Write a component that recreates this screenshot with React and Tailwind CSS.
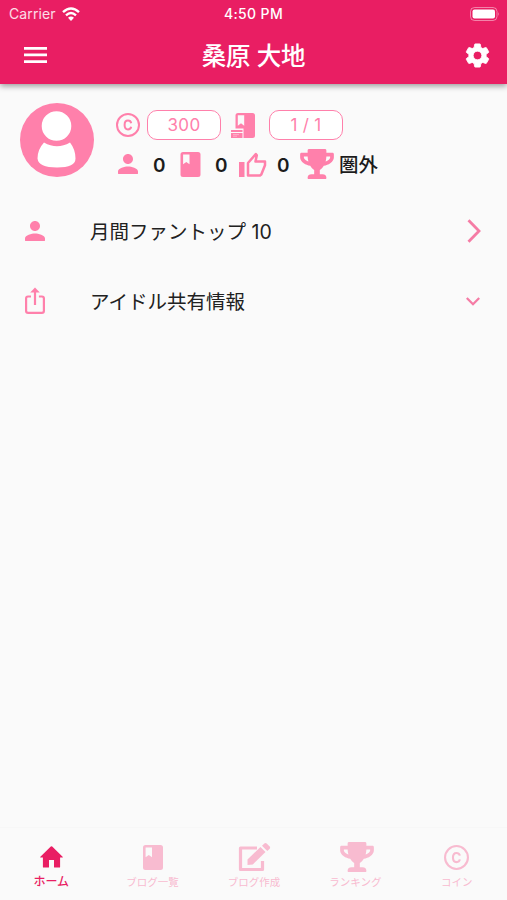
import React from "react";
import { FaTrophy } from "react-icons/fa";

const Person = ({ className }) => (
  <svg viewBox="4 4 16 16" className={className} fill="currentColor">
    <path d="M12 12c2.21 0 4-1.79 4-4s-1.79-4-4-4-4 1.79-4 4 1.79 4 4 4zm0 2c-2.67 0-8 1.34-8 4v1.300q0 .7.700.700h14.600q.7 0 .7-.7V18c0-2.66-5.33-4-8-4z" />
  </svg>
);

const Coin = ({ className }) => (
  <svg viewBox="0 0 24 24" className={className} fill="none" stroke="currentColor">
    <circle cx="12" cy="12" r="11" strokeWidth="2" />
    <path d="M15.2 10.2C14.9 8.6 13.7 7.6 12 7.6c-2.1 0-3.4 1.6-3.4 4.4s1.3 4.4 3.4 4.4c1.7 0 2.9-1 3.2-2.6" strokeWidth="2" />
  </svg>
);

const Book = ({ className }) => (
  <svg viewBox="0 0 20 25" className={className} fill="currentColor" fillRule="evenodd">
    <path d="M2.5 0h15A2.5 2.5 0 0 1 20 2.5v20a2.5 2.5 0 0 1-2.5 2.5h-15A2.5 2.5 0 0 1 0 22.500v-20A2.500 2.500 0 0 1 2.500 0zM2.600 2.400v9.800l3.200-2.200 3.200 2.200V2.400z" />
  </svg>
);

const BookCard = ({ className }) => (
  <svg viewBox="0 0 24 25" className={className} fill="currentColor" fillRule="evenodd">
    <path d="M7 0h14.500A2.500 2.500 0 0 1 24 2.500v20a2.500 2.500 0 0 1-2.500 2.500H12.500v-9.500H4.500v-13A2.500 2.500 0 0 1 7 0zM6.800 2.300v10.500l3.200-2.500 3.200 2.500V2.300z" />
    <path d="M0 17h11.500v2H0zM0 20h11.500v5H0z" />
    <path d="M2 21.600h6M2 23.200h4" stroke="#fff" strokeOpacity=".45" strokeWidth=".8" />
  </svg>
);

const Thumb = ({ className }) => (
  <svg viewBox="0 0 28 25" className={className} fill="none" stroke="currentColor">
    <path d="M0 10h5.500v15H0z" fill="currentColor" stroke="none" />
    <path d="M9 11 16.800 2l1 1.200-1.300 6.300H26v3.800l-3.700 9.200-1.300 1H9z" strokeWidth="2.500" strokeLinejoin="round" />
  </svg>
);

const Home = ({ className }) => (
  <svg viewBox="0 0 23 22" className={className} fill="currentColor">
    <path d="M9 21v-7h5v7q0 .6.600.600h4.800q.700 0 .700-.700V11.600h2.300q.8-.2.200-.8L12.200.600q-.7-.6-1.400 0L.400 10.800q-.6.600.2.800h2.300v9.300q0 .7.700.700h4.800q.6 0 .6-.6z" />
  </svg>
);

const Edit = ({ className }) => (
  <svg viewBox="0 0 34 30" className={className} fill="currentColor">
    <path d="M19 6H2.500v21.500h22V19" fill="none" stroke="currentColor" strokeWidth="3.200" strokeLinejoin="round" />
    <path d="M9.500 23v-5.500L22.500 5l5 5L14.800 22.500z" />
    <path d="m24 3.700 2.300-2.300q1.200-1 2.400 0l3 3q1 1.200 0 2.300L29.300 9z" />
  </svg>
);

const Gear = ({ className }) => (
  <svg viewBox="0 0 24 24" className={className} fill="currentColor" stroke="currentColor" strokeWidth=".7" strokeLinejoin="round">
    <path d="M19.14 12.94c.04-.3.06-.61.06-.94 0-.32-.02-.64-.07-.94l2.030-1.580c.18-.14.23-.41.12-.61l-1.920-3.320c-.12-.22-.37-.29-.59-.22l-2.390.96c-.5-.38-1.030-.7-1.620-.94l-.36-2.540c-.04-.24-.24-.41-.48-.41h-3.840c-.24 0-.43.17-.47.41l-.36 2.540c-.59.24-1.130.57-1.620.94l-2.390-.96c-.22-.08-.47 0-.59.22L2.740 8.870c-.12.21-.08.47.12.61l2.030 1.580c-.05.3-.09.63-.09.94s.02.64.07.94l-2.030 1.580c-.18.14-.23.41-.12.61l1.920 3.320c.12.22.37.29.59.22l2.390-.96c.5.38 1.030.7 1.620.94l.36 2.540c.05.24.24.41.48.41h3.840c.24 0 .44-.17.47-.41l.36-2.540c.59-.24 1.130-.56 1.620-.94l2.390.96c.22.08.47 0 .59-.22l1.920-3.320c.12-.22.07-.47-.12-.61l-2.010-1.580zM12 15.600c-1.980 0-3.600-1.620-3.600-3.600s1.620-3.600 3.600-3.600 3.600 1.620 3.600 3.600-1.620 3.600-3.600 3.600z" />
  </svg>
);

const tabs = [
  { label: "ホーム", icon: <Home className="ml-px h-[22px] w-[23px]" />, active: true },
  { label: "ブログ一覧", icon: <Book className="ml-px h-[25px] w-5" /> },
  { label: "ブログ作成", icon: <Edit className="ml-1 h-[30px] w-[34px]" /> },
  { label: "ランキング", icon: <FaTrophy className="ml-1 h-[30px] w-[34px]" /> },
  { label: "コイン", icon: <Coin className="size-[25px]" /> },
];

export default function App() {
  return (
    <div className="flex h-[900px] w-[507px] flex-col overflow-hidden bg-[#fafafa] font-['Inter','Noto_Sans_CJK_JP',sans-serif] text-[#212121]">
      <header className="h-[84px] shrink-0 bg-[#e91e63] text-white shadow-[0_2px_6px_rgba(0,0,0,0.4)]">
        <div className="grid h-[27px] grid-cols-3 items-center pr-[7px] pl-[9px] text-[14px] leading-none">
          <div className="flex items-center gap-[6px] text-white/85">
            <span className="pt-px tracking-[0.1px]">Carrier</span>
            <svg viewBox="0 0 18 14" className="h-[14px] w-[18px]" fill="none" stroke="white" strokeWidth="2.400">
              <path d="M1 5.200Q9-2.200 17 5.200M4 8.300q5-4.400 10 0" />
              <path d="m6 10.700 3 3.300 3-3.300q-3-2.500-6 0z" fill="white" stroke="none" />
            </svg>
          </div>
          <div className="pt-px pr-[2px] text-center text-[14px] font-medium tracking-[0.35px] whitespace-nowrap">4:50 PM</div>
          <svg viewBox="0 0 30 14" className="h-[14px] w-[30px] justify-self-end" fill="none">
            <rect x=".5" y=".5" width="26.500" height="13" rx="4" stroke="white" strokeOpacity=".45" />
            <rect x="2.500" y="2.500" width="22.500" height="9" rx="2" fill="white" />
            <path d="M28.300 5q1.500 2 0 4z" fill="white" fillOpacity=".5" />
          </svg>
        </div>
        <div className="flex h-14 items-center justify-between pr-[15px] pl-6">
          <svg viewBox="0 0 23 16" className="h-4 w-[23px]" fill="white">
            <path d="M0 0h23v2.700H0zM0 6.600h23v2.700H0zM0 13.300h23V16H0z" />
          </svg>
          <h1 className="mr-[3px] pt-[2px] text-[24.500px] leading-none font-medium tracking-[-0.2px]">桑原 大地</h1>
          <Gear className="size-[29px]" />
        </div>
      </header>

      <section className="flex h-[112px] shrink-0 pt-[19px] pl-5">
        <svg viewBox="0 0 74 74" className="size-[74px]">
          <circle cx="37" cy="37" r="37" fill="#ff80ab" />
          <path d="M24 39.500Q37 47 50 39.500q5.500 7 5.500 16 0 9-18.500 9t-19.500-9q0-9 6.500-16z" fill="white" />
          <circle cx="36.500" cy="23" r="15.800" fill="white" stroke="#ff80ab" strokeWidth="2" />
        </svg>
        <div className="ml-[22px] pt-[7px] text-[#ff80ab]">
          <div className="flex h-[30px] items-center">
            <Coin className="size-[24px]" />
            <div className="ml-[7px] flex h-[30px] w-[74px] items-center justify-center rounded-[10px] border border-[#ff80ab] bg-white pt-[2px] text-[17px] tracking-[0.3px]">300</div>
            <BookCard className="ml-[10px] h-[25px] w-6" />
            <div className="ml-[14px] flex h-[30px] w-[74px] items-center justify-center rounded-[10px] border border-[#ff80ab] bg-white pt-[2px] text-[17px] tracking-[0.3px]">1 / 1</div>
          </div>
          <div className="mt-[9px] flex h-[30px] items-center text-[19px] font-semibold">
            <Person className="ml-[2px] size-5" />
            <span className="ml-[15px] w-[27px] pt-[4px] text-[#1c1c1c]">0</span>
            <Book className="h-[25px] w-[21px]" />
            <span className="ml-[14px] w-6 pt-[4px] text-[#1c1c1c]">0</span>
            <Thumb className="h-[25px] w-7" />
            <span className="ml-[10px] w-[23px] pt-[4px] text-[#1c1c1c]">0</span>
            <FaTrophy className="h-[30px] w-[34px]" />
            <span className="ml-[5px] pt-[4px] text-[19.500px] leading-none font-medium text-[#1c1c1c]">圏外</span>
          </div>
        </div>
      </section>

      <ul className="grow text-[19.500px]">
        <li className="flex h-[70px] items-center pr-[26px] pl-[25px]">
          <Person className="size-5 text-[#ff80ab]" />
          <span className="ml-[45px] grow pt-[3px] leading-none">月間ファントップ 10</span>
          <svg viewBox="0 0 14 24" className="h-6 w-[14px]" fill="none" stroke="#f57ca5" strokeWidth="2.800">
            <path d="m1.500 1.300 10.500 10.700L1.500 22.700" />
          </svg>
        </li>
        <li className="flex h-[70px] items-center pr-[27px] pl-[25px]">
          <svg viewBox="0 0 20 27" className="-mt-[2px] h-[27px] w-5 text-[#ff80ab]" fill="none" stroke="currentColor" strokeWidth="2.200">
            <path d="M6 9.500H3q-1.900 0-1.900 2V24q0 1.900 2 1.900h13.800q2 0 2-1.900V11.500q0-2-2-2h-3M10 18V3" />
            <path d="m5.200 5.500 4.800-5 4.800 5z" fill="currentColor" stroke="none" />
          </svg>
          <span className="ml-[45px] grow pt-[3px] leading-none">アイドル共有情報</span>
          <svg viewBox="0 0 14 9" className="h-[9px] w-[14px]" fill="none" stroke="#f57ca5" strokeWidth="2.300">
            <path d="m.8 1 6.200 6.200L13.200 1" />
          </svg>
        </li>
      </ul>

      <nav className="grid h-[73px] shrink-0 grid-cols-5 border-t border-[#f7f7f7]">
        {tabs.map((t) => (
          <div key={t.label} className={t.active ? "flex flex-col items-center text-[#e91e63]" : "flex flex-col items-center text-[#f8bbd0]"}>
            <div className="mt-[14px] flex h-[30px] items-center">{t.icon}</div>
            <span className={t.active ? "mt-[4px] pl-px text-[12px] leading-none font-medium" : "mt-[6px] pl-px text-[10.500px] leading-none"}>{t.label}</span>
          </div>
        ))}
      </nav>
    </div>
  );
}
